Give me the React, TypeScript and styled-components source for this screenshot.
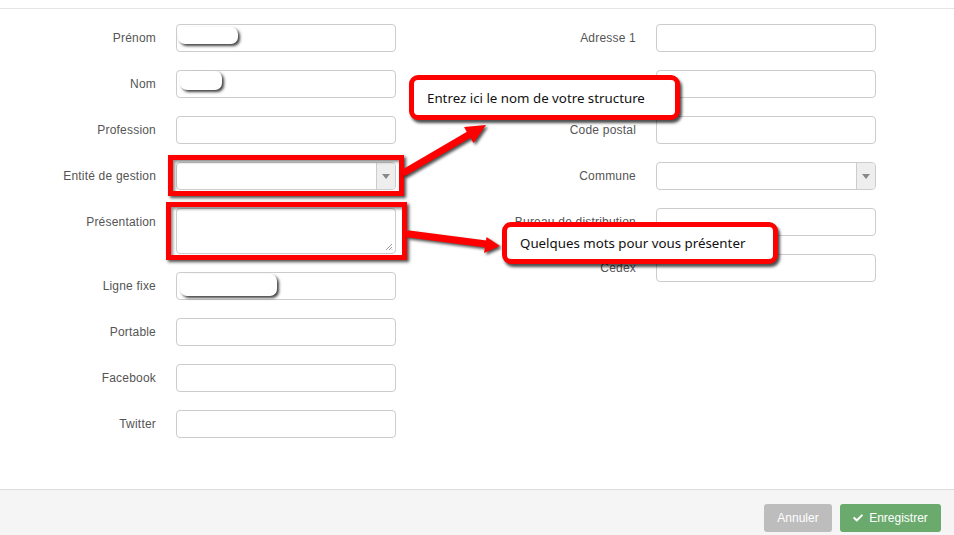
import React from "react";
import styled, { createGlobalStyle } from "styled-components";
import { FaCheck } from "react-icons/fa";

const Global = createGlobalStyle`
  html, body { margin: 0; padding: 0; background: #fff; }
  body { font-family: "Liberation Sans", Arial, sans-serif; }
  * { box-sizing: border-box; }
`;

const Page = styled.div`
  position: relative;
  width: 954px;
  height: 535px;
  display: flex;
  flex-direction: column;
  overflow: hidden;
`;

const TopGap = styled.div`
  height: 9px;
  flex: none;
  border-bottom: 1px solid #e5e5e5;
`;

const Body = styled.div`
  height: 480px;
  flex: none;
  display: grid;
  grid-template-columns: 480px 1fr;
  align-content: start;
  padding-top: 15px;
`;

const Column = styled.div`
  display: flex;
  flex-direction: column;
  gap: 18px;
`;

const Row = styled.div<{ $top?: boolean }>`
  display: flex;
  align-items: ${(p) => (p.$top ? "flex-start" : "center")};
  gap: 20px;
`;

const Label = styled.label<{ $top?: boolean }>`
  width: 156px;
  text-align: right;
  font-size: 12px;
  letter-spacing: 0.2px;
  color: #555;
  padding-top: ${(p) => (p.$top ? "7px" : "0")};
  white-space: nowrap;
`;

const FieldWrap = styled.div`
  position: relative;
  width: 220px;
`;

const Input = styled.div`
  width: 220px;
  height: 28px;
  border: 1px solid #ccc;
  border-radius: 4px;
  background: #fff;
`;

const TextArea = styled.div`
  position: relative;
  width: 220px;
  height: 46px;
  border: 1px solid #ccc;
  border-radius: 4px;
  background: #fff;
`;

const Grip = styled.svg`
  position: absolute;
  right: 2px;
  bottom: 2px;
`;

const Select = styled.div`
  width: 220px;
  height: 28px;
  border: 1px solid #ccc;
  border-radius: 4px;
  background: #fff;
  display: flex;
  justify-content: flex-end;
  overflow: hidden;
`;

const SelectArrow = styled.div`
  width: 19px;
  height: 100%;
  background: #eee;
  border-left: 1px solid #ccc;
  display: flex;
  align-items: center;
  justify-content: center;
  &::after {
    content: "";
    border-left: 4px solid transparent;
    border-right: 4px solid transparent;
    border-top: 5px solid #888;
  }
`;

const Redact = styled.div<{ $l: number; $t: number; $w: number; $h: number }>`
  position: absolute;
  left: ${(p) => p.$l}px;
  top: ${(p) => p.$t}px;
  width: ${(p) => p.$w}px;
  height: ${(p) => p.$h}px;
  background: #fff;
  border-radius: 7px;
  box-shadow: 2px 2px 3px rgba(0, 0, 0, 0.75);
`;

const Footer = styled.div`
  flex: 1;
  background: #f5f5f5;
  border-top: 1px solid #ddd;
  display: flex;
  justify-content: flex-end;
  align-items: flex-start;
  gap: 8px;
  padding: 14px 13px 0 0;
`;

const Button = styled.button<{ $variant: "cancel" | "save" }>`
  height: 28px;
  padding: 0 12px;
  border: none;
  border-radius: 3px;
  font-family: "Liberation Sans", Arial, sans-serif;
  font-size: 12px;
  color: #fff;
  display: flex;
  align-items: center;
  gap: 6px;
  background: ${(p) => (p.$variant === "save" ? "#6aaa6d" : "#bdbdbd")};
  width: ${(p) => (p.$variant === "save" ? "101px" : "68px")};
  justify-content: center;
`;

const HighlightBox = styled.div<{ $l: number; $t: number; $w: number; $h: number }>`
  position: absolute;
  left: ${(p) => p.$l}px;
  top: ${(p) => p.$t}px;
  width: ${(p) => p.$w}px;
  height: ${(p) => p.$h}px;
  border: 5px solid #ff0000;
  box-shadow: 2px 2px 3px rgba(0, 0, 0, 0.7), inset 2px 2px 3px rgba(0, 0, 0, 0.45);
`;

const Callout = styled.div<{ $l: number; $t: number; $w: number; $h: number }>`
  position: absolute;
  left: ${(p) => p.$l}px;
  top: ${(p) => p.$t}px;
  width: ${(p) => p.$w}px;
  height: ${(p) => p.$h}px;
  border: 5px solid #ff0000;
  border-radius: 9px;
  background: #fff;
  box-shadow: 2px 3px 3px rgba(0, 0, 0, 0.7);
  display: flex;
  align-items: center;
  padding-left: 13px;
  font-family: "Noto Sans", "Open Sans", sans-serif;
  font-size: 13.3px;
  color: #111;
  white-space: nowrap;
`;

const Arrows = styled.svg`
  position: absolute;
  left: 0;
  top: 0;
  pointer-events: none;
  filter: drop-shadow(2px 2px 1.5px rgba(0, 0, 0, 0.7));
`;

type F = {
  label: string;
  kind?: "input" | "select" | "textarea";
  redact?: { l: number; t: number; w: number; h: number };
};

const left: F[] = [
  { label: "Prénom", redact: { l: 2, t: 3, w: 60, h: 17 } },
  { label: "Nom", redact: { l: 4, t: 1, w: 42, h: 19 } },
  { label: "Profession" },
  { label: "Entité de gestion", kind: "select" },
  { label: "Présentation", kind: "textarea" },
  { label: "Ligne fixe", redact: { l: 4, t: 2, w: 97, h: 22 } },
  { label: "Portable" },
  { label: "Facebook" },
  { label: "Twitter" },
];

const right: F[] = [
  { label: "Adresse 1" },
  { label: "Adresse 2" },
  { label: "Code postal" },
  { label: "Commune", kind: "select" },
  { label: "Bureau de distribution" },
  { label: "Cedex" },
];

function Field({ f }: { f: F }) {
  const top = f.kind === "textarea";
  return (
    <Row $top={top}>
      <Label $top={top}>{f.label}</Label>
      <FieldWrap>
        {f.kind === "select" ? (
          <Select>
            <SelectArrow />
          </Select>
        ) : f.kind === "textarea" ? (
          <TextArea>
            <Grip width="8" height="8" viewBox="0 0 8 8">
              <path d="M7 1 L1 7 M7 4 L4 7 M7 6.5 L6.5 7" stroke="#999" strokeWidth="1" />
            </Grip>
          </TextArea>
        ) : (
          <Input />
        )}
        {f.redact && <Redact $l={f.redact.l} $t={f.redact.t} $w={f.redact.w} $h={f.redact.h} />}
      </FieldWrap>
    </Row>
  );
}

export default function App() {
  return (
    <Page>
      <Global />
      <TopGap />
      <Body>
        <Column>
          {left.map((f) => (
            <Field key={f.label} f={f} />
          ))}
        </Column>
        <Column>
          {right.map((f) => (
            <Field key={f.label} f={f} />
          ))}
        </Column>
      </Body>
      <Footer>
        <Button $variant="cancel">Annuler</Button>
        <Button $variant="save">
          <FaCheck size={10} />
          Enregistrer
        </Button>
      </Footer>

      <HighlightBox $l={168} $t={155} $w={236} $h={41} />
      <HighlightBox $l={166} $t={202} $w={241} $h={58} />
      <Arrows width="954" height="535" viewBox="0 0 954 535">
        <line x1="405" y1="172" x2="470" y2="134" stroke="#ff0000" strokeWidth="7" strokeLinecap="round" />
        <polygon points="486,125 473.5,143 464,127" fill="#ff0000" />
        <line x1="409" y1="234" x2="486" y2="244" stroke="#ff0000" strokeWidth="7" strokeLinecap="round" />
        <polygon points="500,246 484,253 486.5,237" fill="#ff0000" />
      </Arrows>
      <Callout $l={409} $t={75} $w={271} $h={45}>
        Entrez ici le nom de votre structure
      </Callout>
      <Callout $l={502} $t={222} $w={276} $h={42}>
        Quelques mots pour vous présenter
      </Callout>
    </Page>
  );
}
